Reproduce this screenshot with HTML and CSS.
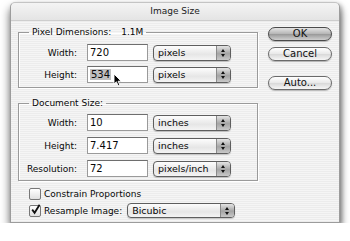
FILE: index.html
```html
<!DOCTYPE html>
<html lang="en">
<head>
    <meta charset="UTF-8">
    <title>Image Size</title>
    <link rel="stylesheet" href="styles.css">
</head>
<body>
    <div class="window">
        <div class="titlebar">Image Size</div>
        <div class="body">
            <div class="main">
                <fieldset class="group">
                    <legend>Pixel Dimensions:<span class="size">1.1M</span></legend>
                    <div class="row">
                        <label>Width:</label>
                        <span class="field">720</span>
                        <span class="popup"><span class="popup-text">pixels</span><span class="cap"></span></span>
                    </div>
                    <div class="row">
                        <label>Height:</label>
                        <span class="field"><span class="selected">534</span></span>
                        <span class="popup"><span class="popup-text">pixels</span><span class="cap"></span></span>
                        <svg class="cursor" width="9" height="14" viewBox="0 0 9 14">
                            <path d="M1 1 L1 11 L3.4 8.8 L5.2 12.8 L6.8 12.1 L5.1 8.2 L8.2 8.2 Z" fill="#000" stroke="#fff" stroke-width="0.9"/>
                        </svg>
                    </div>
                </fieldset>

                <fieldset class="group doc">
                    <legend>Document Size:</legend>
                    <div class="row">
                        <label>Width:</label>
                        <span class="field">10</span>
                        <span class="popup"><span class="popup-text">inches</span><span class="cap"></span></span>
                    </div>
                    <div class="row">
                        <label>Height:</label>
                        <span class="field">7.417</span>
                        <span class="popup"><span class="popup-text">inches</span><span class="cap"></span></span>
                    </div>
                    <div class="row">
                        <label>Resolution:</label>
                        <span class="field">72</span>
                        <span class="popup"><span class="popup-text">pixels/inch</span><span class="cap"></span></span>
                    </div>
                </fieldset>

                <div class="checks">
                    <div class="check-row">
                        <span class="checkbox"></span>
                        <span>Constrain Proportions</span>
                    </div>
                    <div class="check-row">
                        <span class="checkbox checked">
                            <svg width="11" height="11" viewBox="0 0 11 11">
                                <path d="M2.2 5.6 L4.6 8.8 L9.6 0.8" fill="none" stroke="#111" stroke-width="1.8"/>
                            </svg>
                        </span>
                        <span>Resample Image:</span>
                        <span class="popup wide"><span class="popup-text">Bicubic</span><span class="cap"></span></span>
                    </div>
                </div>
            </div>

            <div class="buttons">
                <button class="btn default">OK</button>
                <button class="btn">Cancel</button>
                <button class="btn auto">Auto...</button>
            </div>
        </div>
    </div>
</body>
</html>
```

FILE: styles.css
```css
body { margin: 0; background: #fff; font-family: 'DejaVu Sans', sans-serif; font-size: 9px; color: #080808; }
.window { margin: 2px 0 0 10px; width: 330px; height: 221px; border-radius: 5px 5px 0 0; border: 1px solid #9c9c9c; border-top-color: #c4c4c4; box-sizing: border-box; background: repeating-linear-gradient(to bottom, #ececec 0, #ececec 1px, #f5f5f5 1px, #f5f5f5 2px); box-shadow: 0 6px 10px rgba(0,0,0,0.6), 2px 2px 4px rgba(0,0,0,0.25); }
.titlebar { height: 17px; line-height: 16px; text-align: center; border-radius: 5px 5px 0 0; background: linear-gradient(#f4f4f4, #e4e4e4); border-bottom: 1px solid #cdcdcd; color: #222; }
.body { display: flex; padding: 5px 0 0 7px; }
.main { width: 240px; }

.group { margin: 0; padding: 6px 0 4px 10px; width: 240px; box-sizing: border-box; border: 1px solid #9a9a9a; box-shadow: inset 1px 1px 0 #fff, 1px 1px 0 #fff; }
.group legend { padding: 0 3px; line-height: 12px; }
.size { margin-left: 10px; }
.doc { margin-top: 9px; padding-top: 5px; padding-bottom: 3px; }

.row { display: flex; align-items: center; height: 17px; margin-top: 5px; position: relative; }
.doc .row { margin-top: 6px; }
.row:first-of-type, .doc .row:first-of-type { margin-top: 0; }
.row label { width: 58px; text-align: right; margin-left: -10px; padding-right: 10px; flex-shrink: 0; }
.field { width: 61px; height: 17px; box-sizing: border-box; background: #fff; border: 1px solid #9a9a9a; border-top-color: #6e6e6e; padding-left: 2px; line-height: 15px; font-size: 10px; }
.selected { background: #bfbfbf; padding: 0 1px; }
.cursor { position: absolute; left: 84px; top: 7px; }

.popup { display: flex; width: 78px; height: 16px; margin-left: 5px; box-sizing: border-box; border: 1px solid #5e5e5e; border-radius: 4px; background: linear-gradient(#fdfdfd, #e6e6e6 60%, #f4f4f4); overflow: hidden; box-shadow: 0 1px 1px rgba(0,0,0,0.2); }
.popup-text { flex: 1; padding-left: 4px; line-height: 14px; font-size: 9.5px; }
.cap { width: 13px; border-left: 1px solid #8a8a8a; background: linear-gradient(#e4e4e4, #a4a4a4 55%, #c8c8c8); position: relative; }
.cap::before, .cap::after { content: ""; position: absolute; left: 4px; border-left: 2.5px solid transparent; border-right: 2.5px solid transparent; }
.cap::before { top: 3px; border-bottom: 3px solid #111; }
.cap::after { top: 8px; border-top: 3px solid #111; }

.checks { padding: 5px 0 0 11px; }
.check-row { display: flex; align-items: center; height: 15px; margin-bottom: 2px; }
.checkbox { width: 10px; height: 10px; margin-right: 3px; border: 1px solid #777; border-radius: 2px; background: linear-gradient(#fff, #e0e0e0); position: relative; }
.checkbox svg { position: absolute; left: 0; top: -2px; }
.popup.wide { width: 108px; height: 15px; margin-left: 5px; }

.buttons { display: flex; flex-direction: column; margin-left: 10px; padding-top: 1px; }
.btn { width: 64px; height: 14px; padding: 0; margin-bottom: 6px; font-family: 'DejaVu Sans', sans-serif; font-size: 10px; line-height: 12px; color: #111; border: 1px solid #6a6a6a; border-radius: 7px; background: linear-gradient(#ffffff, #e8e8e8 50%, #d8d8d8 51%, #f6f6f6); box-shadow: 0 1px 1px rgba(0,0,0,0.25); }
.btn.default { background: linear-gradient(#e4e4e4, #b4b4b4 50%, #989898 51%, #cfcfcf); border-color: #4a4a4a; }
.btn.auto { margin-top: 9px; }
```
